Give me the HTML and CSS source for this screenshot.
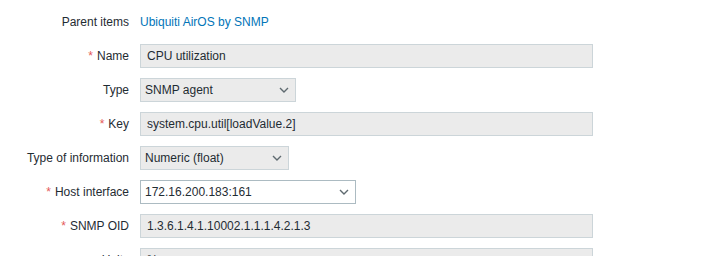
FILE: index.html
```html
<!DOCTYPE html>
<html lang="en">

<head>
  <meta charset="UTF-8" />
  <meta name="viewport" content="width=device-width, initial-scale=1.0" />
  <title>Item</title>
  <link rel="stylesheet" href="styles.css">
</head>

<body>
  <ul class="form-list">
    <li class="form-row">
      <label class="form-label">Parent items</label>
      <div class="form-field"><a class="link" href="#">Ubiquiti AirOS by SNMP</a></div>
    </li>
    <li class="form-row">
      <label class="form-label required">Name</label>
      <div class="form-field"><div class="input readonly wide">CPU utilization</div></div>
    </li>
    <li class="form-row">
      <label class="form-label">Type</label>
      <div class="form-field">
        <div class="select readonly type-select">
          <span>SNMP agent</span>
          <svg class="chevron" width="10" height="6" viewBox="0 0 10 6"><path d="M1 1l4 4 4-4" fill="none" stroke="#5f6a70" stroke-width="1.4"/></svg>
        </div>
      </div>
    </li>
    <li class="form-row">
      <label class="form-label required">Key</label>
      <div class="form-field"><div class="input readonly wide">system.cpu.util[loadValue.2]</div></div>
    </li>
    <li class="form-row">
      <label class="form-label">Type of information</label>
      <div class="form-field">
        <div class="select readonly info-select">
          <span>Numeric (float)</span>
          <svg class="chevron" width="10" height="6" viewBox="0 0 10 6"><path d="M1 1l4 4 4-4" fill="none" stroke="#5f6a70" stroke-width="1.4"/></svg>
        </div>
      </div>
    </li>
    <li class="form-row">
      <label class="form-label required">Host interface</label>
      <div class="form-field">
        <div class="select host-select">
          <span>172.16.200.183:161</span>
          <svg class="chevron" width="10" height="6" viewBox="0 0 10 6"><path d="M1 1l4 4 4-4" fill="none" stroke="#5f6a70" stroke-width="1.4"/></svg>
        </div>
      </div>
    </li>
    <li class="form-row">
      <label class="form-label required">SNMP OID</label>
      <div class="form-field"><div class="input readonly wide">1.3.6.1.4.1.10002.1.1.1.4.2.1.3</div></div>
    </li>
    <li class="form-row">
      <label class="form-label">Units</label>
      <div class="form-field"><div class="input readonly wide">%</div></div>
    </li>
  </ul>
</body>

</html>
```

FILE: styles.css
```css
body {
  margin: 0;
  padding: 0;
  background-color: #ffffff;
  font-family: "Liberation Sans", Arial, sans-serif;
  font-size: 12px;
  color: #1f2c33;
}

.form-list {
  list-style: none;
  margin: 0;
  padding: 10px 0 0 0;
  display: flex;
  flex-direction: column;
  gap: 10px;
}

.form-row {
  display: flex;
  align-items: center;
  gap: 11px;
  min-height: 24px;
}

.form-label {
  width: 129px;
  text-align: right;
  flex-shrink: 0;
}

.form-label.required::before {
  content: "*";
  color: #e45959;
  margin-right: 4px;
}

.link {
  color: #0275b8;
  text-decoration: none;
}

.input,
.select {
  box-sizing: border-box;
  height: 24px;
  border: 1px solid #acbbc2;
  background-color: #ffffff;
  padding: 0 6px;
  display: flex;
  align-items: center;
  white-space: nowrap;
}

.readonly {
  background-color: #ebebeb;
  border-color: #ccd5d9;
}

.wide {
  width: 453px;
}

.select {
  justify-content: space-between;
  padding: 0 4px 0 4px;
}

.chevron {
  margin-right: 2px;
}

.type-select {
  width: 156px;
}

.info-select {
  width: 149px;
}

.host-select {
  width: 216px;
}
```
